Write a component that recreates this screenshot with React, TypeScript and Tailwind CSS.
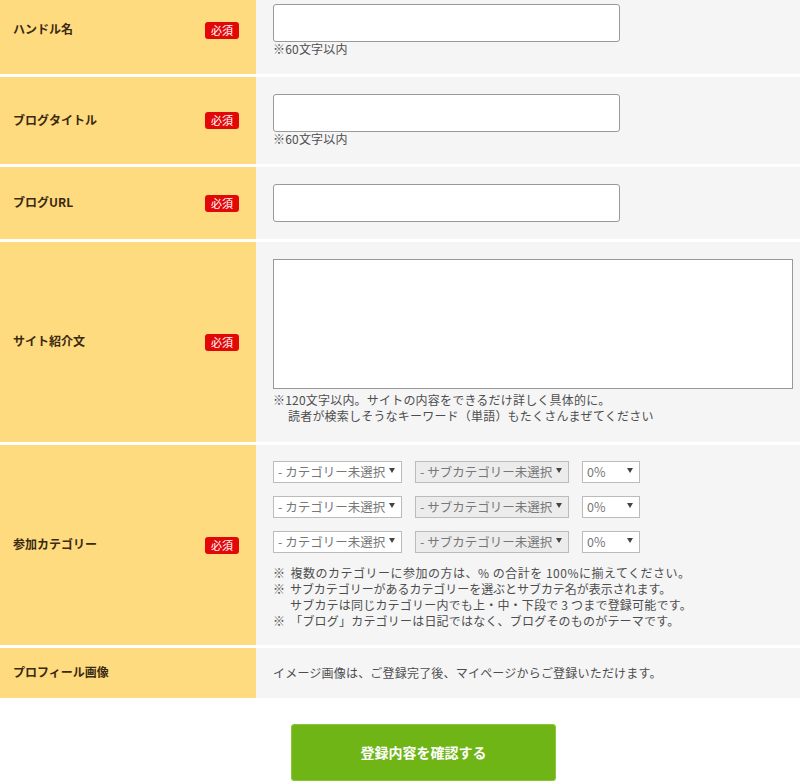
import type { ReactNode } from 'react';

const FONT = "font-['Noto_Sans_CJK_JP','Liberation_Sans',sans-serif]";

function Badge() {
  return (
    <span className="flex h-[17px] w-[34px] items-center justify-center rounded-[3px] bg-[#e30808] text-[11px] leading-none text-white">
      必須
    </span>
  );
}

function Row({
  label,
  required = true,
  className,
  labelClass = '',
  children,
}: {
  label: string;
  required?: boolean;
  className: string;
  labelClass?: string;
  children: ReactNode;
}) {
  return (
    <div className={`flex ${className}`}>
      <div
        className={`flex w-[256px] shrink-0 items-center justify-between bg-[#ffdb80] pl-[13px] pr-[17px] ${labelClass}`}
      >
        <span className="-mt-[2px] text-[12px] font-bold text-[#3a2a10]">{label}</span>
        {required && <Badge />}
      </div>
      <div className="flex-1 bg-[#f5f5f6] pl-[17px] pr-[7px]">{children}</div>
    </div>
  );
}

function TextInput() {
  return (
    <input
      type="text"
      className="block h-[38px] w-[347px] rounded-[3px] border border-[#999] bg-white"
    />
  );
}

function Note({ className = 'tracking-[0.2px]', children }: { className?: string; children: ReactNode }) {
  return <p className={`text-[12px] leading-[16px] text-[#4d4d4d] ${className}`}>{children}</p>;
}

function Select({
  value,
  width,
  disabled = false,
}: {
  value: string;
  width: string;
  disabled?: boolean;
}) {
  return (
    <div className={`relative ${width}`}>
      <select
        disabled={disabled}
        defaultValue={value}
        className={`block h-[22px] w-full appearance-none rounded-none border border-[#bbb] pl-[4px] text-[12.5px] leading-[18px] text-[#777] opacity-100 ${
          disabled ? 'bg-[#ececec]' : 'bg-white'
        }`}
      >
        <option>{value}</option>
      </select>
      <svg
        viewBox="0 0 6 5"
        className="pointer-events-none absolute right-[7px] top-[7px] h-[5px] w-[6px]"
      >
        <path d="M0 0h6L3 5z" fill="#444" />
      </svg>
    </div>
  );
}

function CategoryRow() {
  return (
    <div className="flex gap-[13px]">
      <Select value="- カテゴリー未選択" width="w-[129px]" />
      <Select value="- サブカテゴリー未選択" width="w-[154px]" disabled />
      <Select value="0%" width="w-[58px]" />
    </div>
  );
}

export default function App() {
  return (
    <div className={`h-[784px] w-[800px] overflow-hidden bg-white ${FONT}`}>
      <Row label="ハンドル名" className="mb-[3px] h-[74px]" labelClass="pb-[14px]">
        <div className="pt-[4px]">
          <TextInput />
          <Note className="-mt-[1px] tracking-[0.2px]">※60文字以内</Note>
        </div>
      </Row>
      <Row label="ブログタイトル" className="mb-[3px] h-[87px]">
        <div className="pt-[17px]">
          <TextInput />
          <Note className="-mt-[1px] tracking-[0.2px]">※60文字以内</Note>
        </div>
      </Row>
      <Row label="ブログURL" className="mb-[3px] h-[72px]">
        <div className="pt-[17px]">
          <TextInput />
        </div>
      </Row>
      <Row label="サイト紹介文" className="mb-[3px] h-[200px]">
        <div className="pt-[17px]">
          <textarea className="block h-[130px] w-[520px] resize-none rounded-none border border-[#999] bg-white" />
          <div className="pt-[3px]">
            <Note>※120文字以内。サイトの内容をできるだけ詳しく具体的に。</Note>
            <Note>
              <span className="pl-[15px]">読者が検索しそうなキーワード（単語）もたくさんまぜてください</span>
            </Note>
          </div>
        </div>
      </Row>
      <Row label="参加カテゴリー" className="mb-[3px] h-[200px]">
        <div className="flex flex-col gap-[13px] pt-[16px]">
          <CategoryRow />
          <CategoryRow />
          <CategoryRow />
        </div>
        <div className="pt-[11.5px]">
          <Note className="tracking-[0.5px]">
            ※<span className="pl-[5px]">複数のカテゴリーに参加の方は、% の合計を 100%に揃えてください。</span>
          </Note>
          <Note className="tracking-[-0.05px]">
            ※<span className="pl-[5px]">サブカテゴリーがあるカテゴリーを選ぶとサブカテ名が表示されます。</span>
          </Note>
          <Note>
            <span className="pl-[17px]">サブカテは同じカテゴリー内でも上・中・下段で 3 つまで登録可能です。</span>
          </Note>
          <Note>
            ※<span className="pl-[5px]">「ブログ」カテゴリーは日記ではなく、ブログそのものがテーマです。</span>
          </Note>
        </div>
      </Row>
      <Row label="プロフィール画像" required={false} className="h-[50px]">
        <div className="flex h-full items-center">
          <Note>イメージ画像は、ご登録完了後、マイページからご登録いただけます。</Note>
        </div>
      </Row>
      <div className="pl-[291px] pt-[26px]">
        <button className="h-[57px] w-[265px] rounded-[3px] border border-[#8cc63f] bg-[#6fb516] text-[14px] font-bold text-white">
          登録内容を確認する
        </button>
      </div>
    </div>
  );
}
